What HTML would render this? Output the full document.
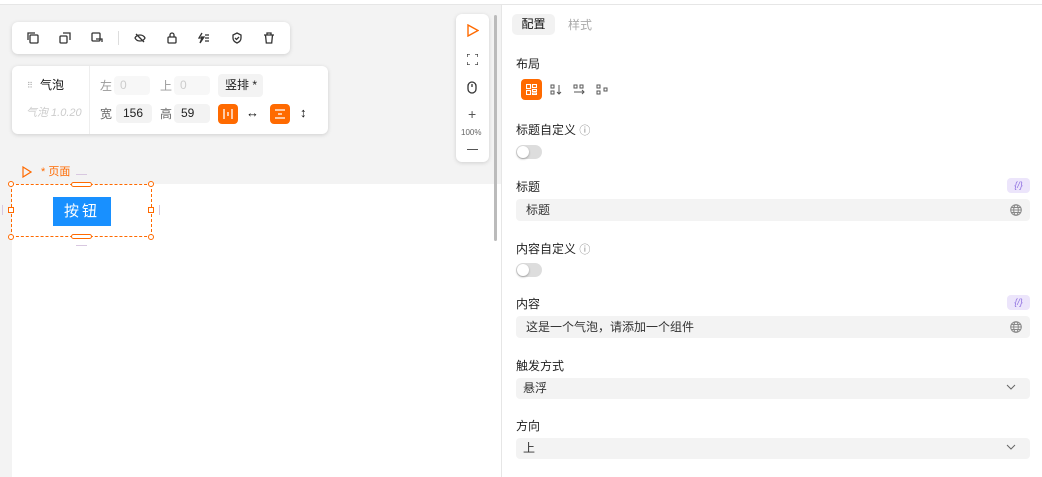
<!DOCTYPE html>
<html><head><meta charset="utf-8"><style>
*{margin:0;padding:0;box-sizing:border-box}
body{width:1042px;height:477px;overflow:hidden;background:#fff;font-family:"Liberation Sans","Noto Sans CJK SC",sans-serif;font-size:12px;line-height:14px;color:#333;position:relative}
.a{position:absolute;white-space:nowrap}
.card{position:absolute;background:#fff;border-radius:6px;box-shadow:0 1px 4px rgba(0,0,0,.15)}
.lbl{position:absolute;left:516px;font-size:12px;color:#222;line-height:14px;white-space:nowrap}
.inp{position:absolute;left:516px;width:514px;height:22px;background:#f3f3f3;border-radius:4px;padding-left:10px;line-height:22px;font-size:12px;color:#333}
.tog{position:absolute;left:516px;width:26px;height:14px;border-radius:7px;background:#ddd}
.tog:after{content:"";position:absolute;left:1px;top:1px;width:12px;height:12px;border-radius:6px;background:#fff;box-shadow:0 1px 2px rgba(0,0,0,.3)}
.badge{position:absolute;left:1007px;width:23px;height:15px;border-radius:4px;background:#ece5fb;color:#8b6be0;font-size:9px;text-align:center;line-height:15px;font-style:italic}
.ic{position:absolute;stroke:#333;fill:none;stroke-width:1.3}
.chev{position:absolute;right:14px;top:6px}
</style></head><body>
<div class="a" style="left:0;top:0;width:1042px;height:5px;background:#fff;border-bottom:1px solid #e6e6e6"></div>
<div class="a" style="left:0;top:5px;width:501px;height:179px;background:#f3f3f3"></div>
<div class="a" style="left:0;top:184px;width:12px;height:293px;background:#f3f3f3"></div>
<div class="a" style="left:501px;top:5px;width:1px;height:472px;background:#e6e6e6"></div>
<div class="a" style="left:494px;top:15px;width:3px;height:226px;background:#bbb;border-radius:2px"></div>

<!-- toolbar 1 -->
<div class="card" style="left:12px;top:22px;width:278px;height:32px">
<svg class="ic" style="left:15px;top:10px" width="12" height="12" viewBox="0 0 12 12"><rect x="3" y="3" width="8" height="8" rx="1"/><path d="M1 8V1h7"/></svg>
<svg class="ic" style="left:47px;top:10px" width="12" height="12" viewBox="0 0 12 12"><rect x="1" y="4" width="7" height="7" rx="1"/><path d="M4 1h7v7"/></svg>
<svg class="ic" style="left:79px;top:10px" width="12" height="12" viewBox="0 0 12 12"><rect x="1" y="1" width="8" height="8" rx="1"/><path d="M5 7h6v3"/></svg>
<div class="a" style="left:106px;top:9px;width:1px;height:14px;background:#ddd"></div>
<svg class="ic" style="left:122px;top:10px" width="12" height="12" viewBox="0 0 12 12"><path d="M1 6c2-4 8-4 10 0c-2 4-8 4-10 0z"/><path d="M2 2l8 8"/></svg>
<svg class="ic" style="left:154px;top:10px" width="12" height="12" viewBox="0 0 12 12"><rect x="2" y="5" width="8" height="6" rx="1"/><path d="M4 5V3a2 2 0 014 0v2"/></svg>
<svg class="ic" style="left:186px;top:10px" width="12" height="12" viewBox="0 0 12 12"><path d="M4 1L1 6h3l-2 5 4-6H3"/><path d="M7 3h4M7 6h4M7 9h4"/></svg>
<svg class="ic" style="left:219px;top:10px" width="12" height="12" viewBox="0 0 12 12"><path d="M6 1l4 2v3c0 3-2 4-4 5c-2-1-4-2-4-5V3z"/><path d="M4 6l1.5 1.5L8 5"/></svg>
<svg class="ic" style="left:251px;top:10px" width="12" height="12" viewBox="0 0 12 12"><path d="M1 3h10M4 3V1h4v2M2.5 3l.8 8h5.4l.8-8"/></svg>
</div>

<!-- toolbar 2 -->
<div class="card" style="left:12px;top:66px;width:316px;height:68px">
<div class="a" style="left:77px;top:0;width:1px;height:68px;background:#eee"></div>
<div class="a" style="left:15px;top:13px;font-size:8px;color:#aaa">⠿</div>
<div class="a" style="left:28px;top:12px;font-size:12px;color:#111">气泡</div>
<div class="a" style="left:14px;top:40px;font-size:11px;color:#ccc;font-style:italic">气泡 1.0.20</div>
<div class="a" style="left:88px;top:13px;color:#999">左</div>
<div class="a" style="left:102px;top:10px;width:36px;height:19px;background:#f7f7f7;border-radius:4px;color:#ccc;padding:2px 6px;line-height:15px">0</div>
<div class="a" style="left:148px;top:13px;color:#999">上</div>
<div class="a" style="left:162px;top:10px;width:36px;height:19px;background:#f7f7f7;border-radius:4px;color:#ccc;padding:2px 6px;line-height:15px">0</div>
<div class="a" style="left:206px;top:8px;width:45px;height:23px;background:#f3f3f3;border-radius:4px;color:#222;padding:0 0 0 7px;line-height:23px">竖排 *</div>
<div class="a" style="left:88px;top:41px;color:#666">宽</div>
<div class="a" style="left:104px;top:38px;width:36px;height:19px;background:#f3f3f3;border-radius:4px;color:#222;padding:0 7px;line-height:19px">156</div>
<div class="a" style="left:148px;top:41px;color:#666">高</div>
<div class="a" style="left:162px;top:38px;width:36px;height:19px;background:#f3f3f3;border-radius:4px;color:#222;padding:0 7px;line-height:19px">59</div>
<div class="a" style="left:206px;top:38px;width:20px;height:20px;background:#ff6a00;border-radius:4px"><svg style="position:absolute;left:5px;top:5px" width="10" height="10" stroke="#fff" stroke-width="1.3"><path d="M1 0v10M9 0v10M5 3v4"/></svg></div>
<div class="a" style="left:234px;top:40px;font-size:13px;color:#111">↔</div>
<div class="a" style="left:258px;top:38px;width:20px;height:20px;background:#ff6a00;border-radius:4px"><svg style="position:absolute;left:5px;top:5px" width="10" height="10" stroke="#fff" stroke-width="1.3"><path d="M0 1h10M0 9h10M3 5h4"/></svg></div>
<div class="a" style="left:288px;top:40px;font-size:13px;color:#111">↕</div>
</div>

<!-- right float -->
<div class="card" style="left:456px;top:14px;width:33px;height:148px">
<svg style="position:absolute;left:11px;top:10px" width="12" height="13" fill="none" stroke="#ff6a00" stroke-width="1.4"><path d="M1 1l10 5.5L1 12z"/></svg>
<svg class="ic" style="left:11px;top:40px" width="11" height="11" viewBox="0 0 11 11"><path d="M0 3V0h3M8 0h3v3M11 8v3H8M3 11H0V8"/></svg>
<svg class="ic" style="left:11px;top:67px" width="10" height="13" viewBox="0 0 10 13"><rect x="1" y="1" width="8" height="11" rx="4"/><path d="M5 3v3"/></svg>
<div class="a" style="left:12px;top:93px;font-size:14px;color:#555">+</div>
<div class="a" style="left:5px;top:112px;font-size:8px;color:#666">100%</div>
<div class="a" style="left:11px;top:135px;width:11px;height:1px;background:#555"></div>
</div>

<!-- page label -->
<svg style="position:absolute;left:22px;top:166px" width="10" height="12" fill="none" stroke="#ff6a00" stroke-width="1.2"><path d="M1 1l8 5-8 5z"/></svg>
<div class="a" style="left:41px;top:165px;font-size:11px;color:#ff6a00">* 页面</div>
<div class="a" style="left:76px;top:174px;width:11px;height:1px;background:#d8c8e0"></div>

<!-- selection -->
<div class="a" style="left:11px;top:184px;width:141px;height:53px;border:1px dashed #ff6a00"></div>
<div class="a" style="left:53px;top:197px;width:58px;height:29px;background:#1890ff;color:#fff;font-size:15px;text-align:center;line-height:29px;letter-spacing:3px">按钮</div>
<div class="a" style="left:8px;top:181px;width:6px;height:6px;border:1px solid #ff6a00;border-radius:50%;background:#fff"></div>
<div class="a" style="left:148px;top:181px;width:6px;height:6px;border:1px solid #ff6a00;border-radius:50%;background:#fff"></div>
<div class="a" style="left:8px;top:234px;width:6px;height:6px;border:1px solid #ff6a00;border-radius:50%;background:#fff"></div>
<div class="a" style="left:148px;top:234px;width:6px;height:6px;border:1px solid #ff6a00;border-radius:50%;background:#fff"></div>
<div class="a" style="left:71px;top:182px;width:21px;height:5px;border:1px solid #ff6a00;border-radius:3px;background:#fff"></div>
<div class="a" style="left:71px;top:234px;width:21px;height:5px;border:1px solid #ff6a00;border-radius:3px;background:#fff"></div>
<div class="a" style="left:8px;top:207px;width:6px;height:6px;border:1px solid #ff6a00;background:#fff"></div>
<div class="a" style="left:148px;top:207px;width:6px;height:6px;border:1px solid #ff6a00;background:#fff"></div>
<div class="a" style="left:76px;top:245px;width:11px;height:1px;background:#d8c8e0"></div>
<div class="a" style="left:2px;top:205px;width:1px;height:10px;background:#d8c8e0"></div>
<div class="a" style="left:159px;top:205px;width:1px;height:10px;background:#d8c8e0"></div>

<!-- right panel -->
<div class="a" style="left:512px;top:14px;width:43px;height:21px;background:#f2f2f2;border-radius:5px;text-align:center;line-height:21px;color:#111">配置</div>
<div class="a" style="left:568px;top:18px;color:#aaa">样式</div>
<div class="lbl" style="top:57px">布局</div>
<div class="a" style="left:521px;top:79px;width:21px;height:21px;background:#ff6a00;border-radius:4px"><svg style="position:absolute;left:5px;top:5px" width="11" height="11" fill="none" stroke="#fff" stroke-width="1.1"><rect x=".5" y=".5" width="4" height="4"/><rect x="6.5" y=".5" width="4" height="3"/><rect x="6.5" y="5.5" width="4" height="2"/><rect x=".5" y="6.5" width="4" height="4"/><rect x="6.5" y="9" width="4" height="1.5"/></svg></div>
<svg class="ic" style="left:550px;top:84px;stroke:#555;stroke-width:1" width="12" height="12"><rect x="1" y="1" width="3" height="3"/><rect x="1" y="7" width="3" height="3"/><path d="M9 1v9M7 8l2 2 2-2"/></svg>
<svg class="ic" style="left:573px;top:84px;stroke:#555;stroke-width:1" width="13" height="12"><rect x="1" y="1" width="3" height="3"/><rect x="7" y="1" width="3" height="3"/><path d="M1 8h10M9 6l2 2-2 2"/></svg>
<svg class="ic" style="left:596px;top:84px;stroke:#555;stroke-width:1" width="13" height="12"><rect x="1" y="1" width="3" height="3"/><rect x="8" y="4" width="3" height="3"/><rect x="1" y="7" width="3" height="3"/></svg>

<div class="lbl" style="top:123px">标题自定义 <span style="color:#888;font-size:11px">ⓘ</span></div>
<div class="tog" style="top:145px"></div>
<div class="lbl" style="top:180px">标题</div>
<div class="badge" style="top:178px">{/}</div>
<div class="inp" style="top:199px">标题<svg style="position:absolute;right:8px;top:5px" width="12" height="12" fill="none" stroke="#888" stroke-width="1"><circle cx="6" cy="6" r="5.3"/><ellipse cx="6" cy="6" rx="2.3" ry="5.3"/><path d="M.7 6h10.6M1.5 3.5h9M1.5 8.5h9"/></svg></div>

<div class="lbl" style="top:242px">内容自定义 <span style="color:#888;font-size:11px">ⓘ</span></div>
<div class="tog" style="top:263px"></div>
<div class="lbl" style="top:297px">内容</div>
<div class="badge" style="top:295px">{/}</div>
<div class="inp" style="top:316px">这是一个气泡，请添加一个组件<svg style="position:absolute;right:8px;top:5px" width="12" height="12" fill="none" stroke="#888" stroke-width="1"><circle cx="6" cy="6" r="5.3"/><ellipse cx="6" cy="6" rx="2.3" ry="5.3"/><path d="M.7 6h10.6M1.5 3.5h9M1.5 8.5h9"/></svg></div>

<div class="lbl" style="top:359px">触发方式</div>
<div class="inp" style="top:378px;height:21px;line-height:21px;padding-left:7px">悬浮<svg class="chev" width="10" height="7" fill="none" stroke="#666" stroke-width="1"><path d="M1 1l4 4 4-4"/></svg></div>
<div class="lbl" style="top:419px">方向</div>
<div class="inp" style="top:438px;height:21px;line-height:21px;padding-left:7px">上<svg class="chev" width="10" height="7" fill="none" stroke="#666" stroke-width="1"><path d="M1 1l4 4 4-4"/></svg></div>
</body></html>
